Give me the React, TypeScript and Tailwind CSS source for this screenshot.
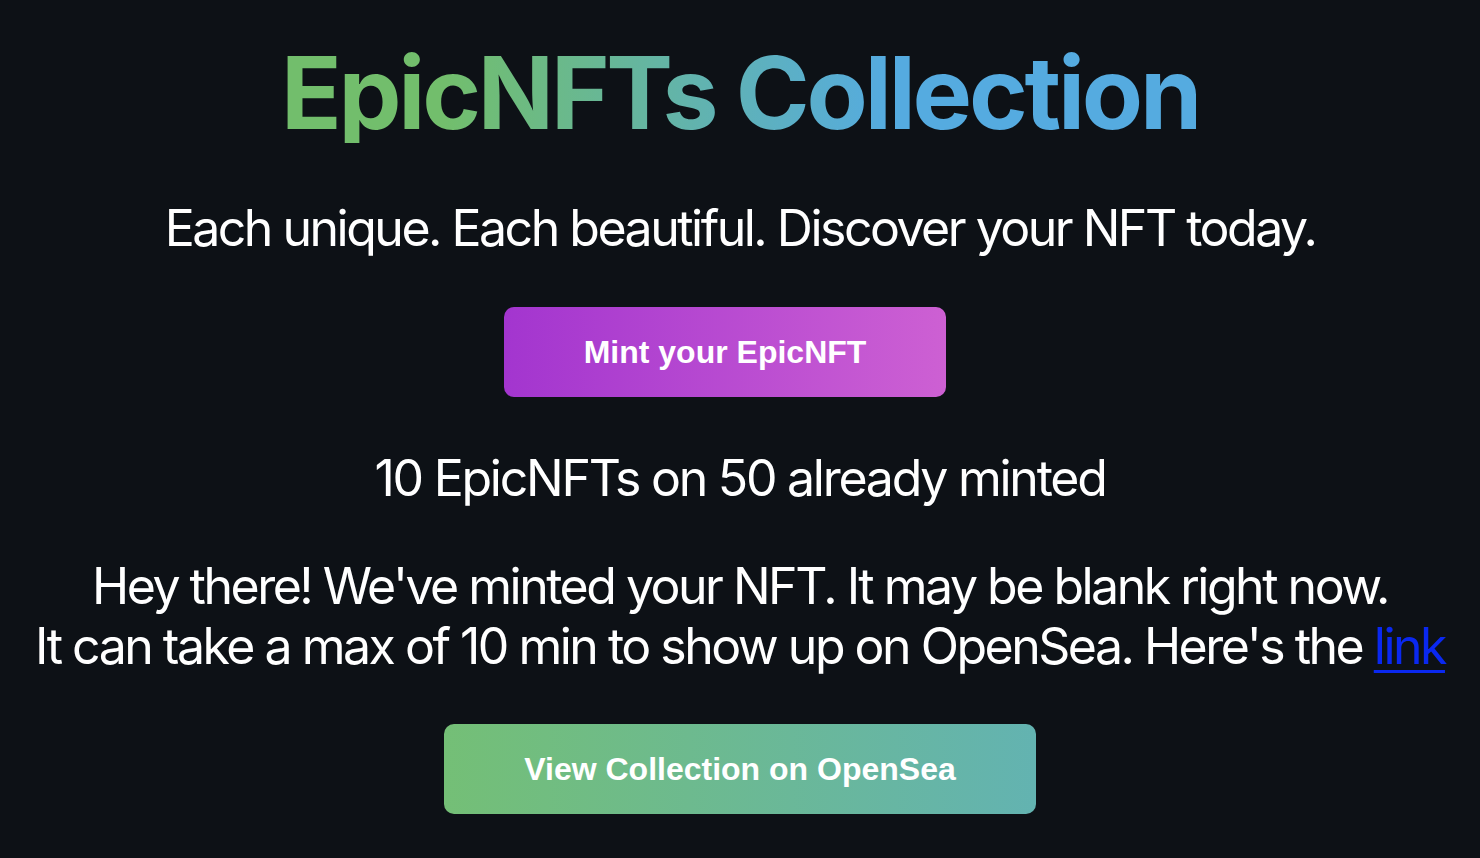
import React from "react";

export default function App() {
  return (
    <div className="min-h-screen w-full bg-[#0d1116] flex flex-col items-center text-center text-white font-['Inter',sans-serif]">
      <p className="w-full mt-[43px] text-[100px] leading-[100px] font-bold tracking-[-3.2px] bg-[linear-gradient(to_right,#72be6c_30%,#55abe0_60%)] bg-clip-text text-transparent">
        EpicNFTs Collection
      </p>
      <p className="mt-[60px] text-[50px] leading-[50px] font-normal tracking-[-2.5px] whitespace-nowrap">
        Each unique. Each beautiful. Discover your NFT today.
      </p>
      <button className="mt-[54px] mr-[30px] h-[90px] px-[80px] rounded-[10px] bg-[linear-gradient(to_right,#a335cf,#cd60d3)] font-['Liberation_Sans',Arial,sans-serif] font-bold text-[32px] text-white">
        Mint your EpicNFT
      </button>
      <p className="mt-[56px] text-[50px] leading-[50px] tracking-[-2.25px] whitespace-nowrap">
        10 EpicNFTs on 50 already minted
      </p>
      <p className="mt-[53px] text-[50px] leading-[60px] tracking-[-2.5px] whitespace-nowrap">
        Hey there! We've minted your NFT. It may be blank right now.
        <br />
        It can take a max of 10 min to show up on OpenSea. Here's the{" "}
        <a href="#" className="text-[#0a28f0] underline decoration-[3px] underline-offset-[6px]">
          link
        </a>
      </p>
      <button className="mt-[48px] h-[90px] px-[80px] rounded-[10px] bg-[linear-gradient(to_right,#74bf76,#63b3b1)] font-['Liberation_Sans',Arial,sans-serif] font-bold text-[32px] text-white">
        View Collection on OpenSea
      </button>
    </div>
  );
}
